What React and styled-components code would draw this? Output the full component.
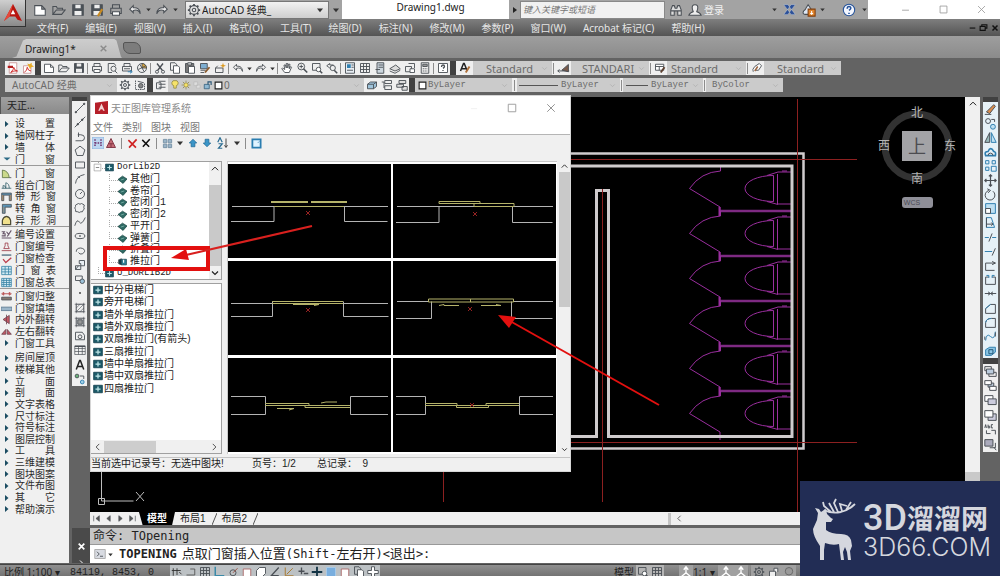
import React, { useState } from "react";
import styled, { createGlobalStyle } from "styled-components";

const UI = `"Noto Sans", "Noto Sans CJK SC", sans-serif`;
const CJK = `"Liberation Sans", "Noto Sans CJK SC", sans-serif`;
const MONO = `"Liberation Mono", "Noto Sans CJK SC", monospace`;
const CONSOLE = `"DejaVu Sans Mono", "Noto Sans CJK SC", monospace`;

const GlobalStyle = createGlobalStyle`
  * { box-sizing: border-box; }
  body { margin: 0; background: #636363; font-family: ${UI}; font-size: 10px; overflow: hidden; }
  button, input, select { font: inherit; color: inherit; background: none; border: 0; padding: 0; margin: 0; border-radius: 0; }
  select { appearance: none; outline: none; }
  ul { list-style: none; margin: 0; padding: 0; }
  h1, h2 { margin: 0; font: inherit; }
  svg { display: block; flex: none; }
`;

/* ---------- icons ---------- */

const blue = "#2f7fb0";

const glyphs = {
  new: <path d="M2 3h8l4 4v7H2zM10 3v4h4" fill="#fff" />,
  open: <path d="M1 13V4h4l1 2h6v2M1 13l4-5h10l-4 5z" />,
  save: <><path d="M2 2h12v12H2z" fill="#4c5258" /><path d="M5 2h6v4H5zM4 9h8v5H4z" fill="#eee" stroke="none" /></>,
  saveAs: <><path d="M2 2h12v12H2z" fill="#4c5258" /><path d="M5 2h6v4H5zM4 9h8v5H4z" fill="#eee" stroke="none" /><path d="M14 7l-5 8" stroke="#c98a20" strokeWidth="2.4" /></>,
  print: <><path d="M4 6V2h8v4M2 6h12v6H2z" /><path d="M4 10h8v4H4z" fill="#fff" /></>,
  plot: <><path d="M4 6V2h8v4M2 6h12v6H2z" /><path d="M4 9h8" /><path d="M9 13h5M12 11l3 2-3 2" stroke={blue} /></>,
  preview: <><path d="M3 14V2h8l2 3M3 14h5" /><circle cx="10" cy="9" r="3.4" /><path d="M12 12l3 3" /></>,
  publish: <><circle cx="8" cy="8" r="6" /><path d="M8 8V2a6 6 0 0 1 6 6z" fill="#dba63a" /><path d="M3 10l10-5M5 3l6 10" /></>,
  undo: <path d="M6 3L2 7l4 4V8.500q6-2 8 4Q14 5 6 5.500z" fill="#eee" />,
  redo: <path d="M10 3l4 4-4 4V8.500q-6-2-8 4Q2 5 10 5.500z" fill="#eee" />,
  caret: <path d="M4 6h8l-4 5z" fill="#333" stroke="none" />,
  down: <path d="M4 6l4 4 4-4" />,
  up: <path d="M3 10l5-5 5 5" />,
  left: <path d="M10 3L5 8l5 5" />,
  right: <path d="M6 3l5 5-5 5" />,
  play: <path d="M4 2l8 6-8 6z" fill="#222" stroke="none" />,
  gear: <><circle cx="8" cy="8" r="5" /><circle cx="8" cy="8" r="2" /><path d="M8 1v2M8 13v2M1 8h2M13 8h2M3 3l1.500 1.500M11.500 11.500L13 13M13 3l-1.500 1.500M4.500 11.500L3 13" strokeWidth="2" /></>,
  gearBox: <><path d="M2 2v12h12V6" strokeDasharray="2 1" /><circle cx="9" cy="9" r="3" fill="#888" /><path d="M5 3l8 2" /></>,
  binoculars: <path d="M2 14V8l2-5h2l1 3h2l1-3h2l2 5v6h-4v-5H6v5zM2 9h4M10 9h4" fill="#ddd" />,
  user: <path d="M8 2q4 0 3 5l-1 3q4 1 5 4H1q1-3 5-4L5 7Q4 2 8 2z" fill="#eee" />,
  exchange: <path d="M1 2h5l9 12h-5zM15 2h-5L1 14h5z" fill="#2b4f97" stroke="#cfe0f5" strokeWidth=".4" />,
  cloud: <><path d="M7 2l4 6-3 5H3q-3-1-1-4 2-1 3-4z" fill="#dfe8f5" /><path d="M7 7h8v8H7z" fill="#e2842b" stroke="#804010" /><path d="M11 9v4M9.500 11.500L11 13l1.500-1.500" stroke="#fff" /></>,
  help: <><circle cx="8" cy="8" r="6.500" fill="#f4f7ff" stroke="#26539a" /><path d="M6 6.500Q6 4 8 4t2 2q0 1-2 2.500M8 11v1.500" stroke="#26539a" strokeWidth="1.800" /></>,
  helpBox: <><path d="M2 2h12v12H2z" fill="#fff" /><path d="M6 6.500Q6 4 8 4t2 2q0 1-2 2.500M8 10.500v1.500" strokeWidth="1.800" /></>,
  min: <path d="M3 9h10" />,
  max: <path d="M3 3h10v10H3z" />,
  restore: <path d="M5 6V3h9v6h-3M2 6h9v7H2z" />,
  close: <path d="M3 3l10 10M13 3L3 13" />,
  pdf: <><path d="M3 1h10v14H3z" fill="#fff" stroke="#c99" /><path d="M1 5h7v3H1z" fill="#b31d1d" stroke="none" /><path d="M5 14q4-4 4-7 1 5 5 5-5-1-9 2z" stroke="#c22" /></>,
  pdfEdit: <><path d="M2 5h10v10H2z" fill="#fff" stroke="#c99" /><path d="M3 14q4-3 4-7 1 5 5 5" stroke="#c22" /><path d="M7 2l3 1 3-2v3l3 2-4 1-1 3-2-4z" fill="#e8ad28" stroke="none" /></>,
  cut: <><path d="M4 2l7 9M12 2L5 11" strokeWidth="1.800" /><circle cx="4" cy="13" r="2" /><circle cx="12" cy="13" r="2" /></>,
  copy: <><path d="M2 1h6l2 2v8H2z" /><path d="M6 5h6l2 2v8H6z" fill="#fff" /></>,
  paste: <><path d="M2 2h11v12H2z" fill="#777" /><path d="M6 6h8v9H6z" fill="#fff" /><path d="M5 1h5v3H5z" fill="#ddd" /></>,
  match: <><path d="M2 2h9v7H2z" fill="#7eaed0" /><path d="M2 11h7M2 14h5" /><path d="M14 7l-6 7" stroke="#8a5a2b" strokeWidth="2.400" /></>,
  block: <><path d="M2 8h10v6H2zM2 8l3-3" /><path d="M12 1l1 3 3 1-3 1-1 3-1-3-3-1 3-1z" fill="#dc9b20" stroke="none" /></>,
  pan: <path d="M5 14L1 9l1-1 3 2-1-6h2l1 4V2h2v6l1-5h2l-1 6 2-3 1 1-3 7z" fill="#fff" />,
  zoom: <><circle cx="7" cy="6" r="4.500" /><path d="M7 3.500v5M4.500 6h5" /><path d="M10 9l5 5" strokeWidth="2.200" /></>,
  zoomWin: <><path d="M2 2h10v9H2z" /><circle cx="10" cy="10" r="3" fill="#fff" /><path d="M12 12l3 3" strokeWidth="2" /></>,
  zoomPrev: <><path d="M1 5l4-3v2h5M1 5l4 3" /><circle cx="9" cy="8" r="3.500" /><path d="M11 11l4 4" strokeWidth="2" /></>,
  props: <><path d="M2 1h12v14H2z" fill="#e8eef4" /><path d="M4 3h5v5H4z" fill={blue} stroke="none" /><path d="M10 4h3M10 7h3M4 11h8" /></>,
  design: <><path d="M2 2h12v12H2z" /><path d="M2 6h12M2 10h12M6 2v12M10 2v12" /></>,
  palette: <><path d="M4 1h9v14H4z" fill="#ccd6de" /><path d="M6 4h6M6 7h6M2 10h6" /></>,
  sheet: <><path d="M1 9l8-5 6 5-7 3z" fill="#ddd" /><path d="M1 12l7 3 7-4" /></>,
  markup: <><path d="M2 6h8v7H2zM6 2h8v6" /><path d="M8 9h6v5H8z" fill="#fff" /></>,
  calc: <><path d="M3 1h10v14H3z" /><path d="M5 3h6v3H5z" fill="#999" /><path d="M5 9h6M5 12h6" strokeDasharray="1.500 1" /></>,
  textStyle: <><path d="M2 12L6 2h1l4 10M4 9h6" strokeWidth="2" stroke="#222" /><path d="M14 6l-5 8" stroke="#b0713a" strokeWidth="2.600" /></>,
  dimStyle: <><path d="M1 11h14M3 9l-2 2 2 2" /><path d="M14 3v9L6 10z" fill="#7a5a4a" /></>,
  tableStyle: <><path d="M2 3h11v8H2zM2 6h11M7 6v5" fill="#fff" /><path d="M14 7l-5 7" stroke="#5d4030" strokeWidth="2.600" /></>,
  leader: <><path d="M3 13q-2-3 2-7l6-4 3 3-4 6H6" fill="#fff" /><path d="M5 12l4-6" stroke="#9b6540" strokeWidth="2" /></>,
  layers: <><path d="M5 3h9M5 7h9M5 11h9M2 5h6v8H2z" fill="#eee" /></>,
  layerPrev: <><path d="M2 7l4-3h8v6l-4 3H2z" fill="#9ec3da" /><path d="M2 7h8v6M10 7l4-3" /></>,
  layerState: <path d="M5 2h9v4H5zM5 9h9v5H5zM1 4h3v8" />,
  layerIso: <path d="M4 2h9v4H4zM1 7h9v4H1zM8 10h7v5H8z" fill="#ddd" />,
  bulb: <path d="M8 1a4 4 0 0 1 2 8v4H6V9a4 4 0 0 1 2-8z" fill="#f6e36a" stroke="#8a8040" />,
  sun: <><circle cx="8" cy="8" r="3.500" fill="#f6e36a" stroke="#8a8040" /><path d="M8 1v2M8 13v2M1 8h2M13 8h2M3 3l2 2M11 11l2 2M13 3l-2 2M5 11l-2 2" stroke="#8a8040" /></>,
  freeze: <path d="M3 3h6v6H3zM7 8h6v5H7z" fill="#ddd" stroke="#bbb" />,
  lock: <><path d="M2 7h8v7H2z" fill="#8fb8d2" stroke="#2c5878" /><path d="M8 7V3h5v5" stroke="#2c5878" strokeWidth="1.800" /></>,
  swatch: <path d="M2 2h12v12H2z" fill="#fff" stroke="#222" strokeWidth="2" />,

  line: <><path d="M2 14L14 2" /><circle cx="2.500" cy="13.500" r="1" fill="#555" /><circle cx="13.500" cy="2.500" r="1" fill="#555" /></>,
  xline: <><path d="M1 15L15 1" /><circle cx="5" cy="11" r="1" fill="#333" /><circle cx="11" cy="5" r="1" fill="#333" /></>,
  pline: <path d="M2 13h8q4 0 4-4T9 5H5M6 8V2" />,
  polygon: <path d="M8 1.500l6.500 5L12 14H4L1.500 6.500z" />,
  rect: <path d="M2 4h12v8H2z" />,
  arc: <path d="M2 14Q3 4 14 2M5 5l3 1" />,
  circle: <><circle cx="8" cy="8" r="6" /><path d="M8 8l3-3" /></>,
  rev: <path d="M4 3q2-2 4 0 2-2 4 0 3 0 1 4 2 3-1 4 0 3-3 2-2 2-4 0-4 1-3-3-2-2 0-4-1-2 2-3z" />,
  spline: <path d="M1 13Q4 3 7 8t8-6" />,
  ellipse: <><ellipse cx="8" cy="8" rx="6.500" ry="3.500" /><circle cx="8" cy="8" r=".6" fill="#444" /></>,
  ellArc: <path d="M3 9Q3 4 9 4q6 1 5 5-2 4-6 3l-2-2" />,
  insert: <path d="M2 9h7v5H2zM7 2h7v7H9V6H7zM2 14l4-5" fill="#e9eef2" />,
  makeBlock: <><path d="M2 4h9v6H2z" /><circle cx="11" cy="11" r="3" fill="#9ec3da" /></>,
  point: <circle cx="8" cy="8" r="1.200" fill="#333" stroke="none" />,
  hatch: <><path d="M3 3h10v10H3zM1 3h14M1 13h14M3 1v14M13 1v14" strokeWidth=".8" /><path d="M3 8l5-5M3 13L13 3M8 13l5-5" strokeWidth=".8" /></>,
  gradient: <><path d="M3 3h10v10H3zM1 3h14M1 13h14M3 1v14M13 1v14" strokeWidth=".8" /><path d="M5 5h6v6H5z" fill="#999" /></>,
  region: <><path d="M2 3h9l3 4v6H2z" /><circle cx="8" cy="9" r="2.500" /></>,
  table: <><path d="M1 3h14v11H1zM1 6h14M1 10h14M6 3v11M11 3v11" strokeWidth=".9" /><path d="M1 3h14" strokeWidth="2" /></>,
  mtext: <path d="M3 14L7.500 2h1L13 14M4.500 10h7" strokeWidth="2" stroke="#222" />,
  add: <><circle cx="4" cy="4" r="2.500" fill="#6ab47a" /><circle cx="11" cy="12" r="2.500" fill="#9fd0e8" stroke={blue} /><path d="M8 4h5v4" /></>,

  erase: <><path d="M3 11l9-9 2 2-7 9z" fill="#d98c4c" /><path d="M1 14h8" /></>,
  copyObj: <><circle cx="5" cy="5" r="3" /><circle cx="11" cy="12" r="3" fill="#bfe0f2" stroke={blue} /><path d="M9 3h4v3" /></>,
  mirror: <><path d="M7 2v12H1z" fill="#9bb" /><path d="M9 2v12h6z" fill="#bfe0f2" stroke={blue} /></>,
  offset: <><path d="M2 13q-2-5 3-5 3-7 7 0 3 0 2 5z" stroke={blue} strokeWidth="2" /><path d="M5 13q0-3 3-3t3 3" /></>,
  array: <path d="M2 2h4v4H2zM10 2h4v4h-4zM2 10h4v4H2zM9 9h6v6H9z" stroke={blue} />,
  move: <path d="M8 1v14M1 8h14M6 3l2-2 2 2M6 13l2 2 2-2M3 6L1 8l2 2M13 6l2 2-2 2" strokeWidth="1.500" />,
  rotate: <path d="M6 3a6 6 0 1 0 5 1M4 1l4 2-3 3" />,
  scale: <><path d="M2 2h12v12H2z" fill="#bfe0f2" stroke={blue} /><path d="M2 8h6v6H2z" fill="#fff" /></>,
  stretch: <><path d="M3 2h6l4 12H3z" stroke={blue} /><path d="M3 10h8M9 8l2 2-2 2M3 2v12" /></>,
  trim: <><path d="M1 8h5M10 8h5" stroke={blue} /><path d="M6 13L10 3" /></>,
  extend: <><path d="M1 8h9" stroke={blue} /><path d="M10 13l4-9" /></>,
  breakPt: <path d="M14 5H2v9h11M10 3l4 2-4 2" />,
  breakIt: <><path d="M6 5H2v9h12V5h-4" /><path d="M3 3h3v3M13 3h-3v3" stroke={blue} /></>,
  join: <path d="M1 8h14M5 6l3 2-3 2M11 6L8 8l3 2" />,
  chamfer: <><path d="M2 14V8l6-5h6v11z" /><path d="M2 8l6-5" stroke={blue} /></>,
  fillet: <><path d="M2 14V8q1-5 7-5h5v11z" /><path d="M2 8q1-5 7-5" stroke={blue} /></>,
  blend: <><path d="M2 13Q3 3 8 8t6-6" stroke={blue} /><path d="M1 12V8M14 8V3" /></>,
  explode: <><path d="M2 7l5-3h7v6l-5 4H2z" fill="#8cc6e4" stroke={blue} /><path d="M6 7h5v5H6z" stroke="#1f5577" /></>,
  front: <><path d="M1 2h8v5H1zM6 9h9v5H6z" /><path d="M3 5h9v6H3z" fill="#bcd" /></>,
  back: <><path d="M5 5h7v5H5z" fill="#bcd" /><path d="M1 2h8v5H1zM7 9h8v5H7z" fill="#fff" /></>,
  above: <><path d="M1 2h10v7H1z" fill="#fff" /><path d="M5 6h10v7H5z" fill="#ccd" /></>,
  under: <><path d="M5 6h10v8H5z" fill="#ccd" /><path d="M1 2h10v8H1z" fill="#fff" /></>,
  textFront: <><path d="M1 6l1-4 1 4M5 2v4h2V4H5M11 2H9v4h2" /><path d="M3 9v4h5M9 9h5v5" /></>,
  hatchBack: <><path d="M1 2h10v8H1z" fill="#aab" /><path d="M7 12h7V6M12 11l3 4" /></>,

  door: <><path d="M2 14V3q9 1 10 11z" fill="#cbd98c" stroke="#5c7344" /><path d="M12 14h3" /></>,
  combo: <path d="M1 12h14M3 12V8q4 0 4 4V4q5 1 5 8" stroke="#38626e" />,
  strip: <><path d="M1 3h14v3H1z" fill="#5b94b6" /><path d="M1 6v8h3V6M12 6v8h3V6" fill="#ac9270" /></>,
  corner: <><path d="M2 2h13v4H6v9H2z" fill="#5b94b6" /><path d="M4 6v8" stroke="#ac9270" /></>,
  arch: <path d="M2 14V8q1-5 6-6 5 1 6 6v6z" fill="#f0e08c" stroke="#4d4d38" strokeWidth="1.800" />,
  number: <path d="M1 13h14M1 4h4l-2 3h3v3H1M8 4l4 5M15 2L9 11" stroke="#675568" strokeWidth="1.600" />,
  numStamp: <path d="M1 14h14M4 11h8l-2-4V3H6v4z" stroke="#9c3b48" />,
  check: <><path d="M1 3h14" stroke="#527084" strokeWidth="2" /><path d="M3 9l4 5 8-7" stroke="#bd4350" strokeWidth="2" /></>,
  grid: <path d="M1 2h14v12H1zM1 6h14M1 10h14M6 2v12M11 2v12" fill="#d4ebf4" stroke="#3c86a8" />,
  gridFull: <path d="M1 2h14v12H1zM1 5h14M1 8h14M1 11h14M4 2v12M8 2v12M12 2v12" fill="#d4ebf4" stroke="#3c86a8" />,
  align: <><path d="M1 4l3-2v4zM15 4l-3-2v4zM3 4h10" stroke="#b33b3b" /><path d="M1 9h14v4H1z" fill="#86796f" /></>,
  fill: <path d="M0 6h16v5H0z" fill="#9cb6c9" stroke="#5c7890" />,
  flipIn: <path d="M12 2v12L3 8zM8 1v14" fill="#c65663" stroke="#6e4450" />,
  flipSide: <path d="M1 12l6-7v7zM9 5v7h6z" fill="#c65663" stroke="#6e4450" />,
  tri: <path d="M4 2l7 6-7 6z" fill="#1b4c62" stroke="none" />,
  triDown: <path d="M1 5h14l-7 6z" fill="#2c6a86" stroke="none" />,

  lib: <><path d="M1 2h14v12H1z" fill="#1c5a68" stroke="#0e3a48" /><path d="M8 4v8M4 8h8" stroke="#bfe6e8" strokeWidth="2" /></>,
  leaf: <><path d="M0 8l8-6 8 5-7 8z" fill="#2e6a64" stroke="#123e3c" /><path d="M5 9l6-2" stroke="#8fc0b8" /></>,
  leafOpen: <><path d="M1 5l5-2v11l-5-2z" fill="#123e48" /><path d="M6 4h9v10H6z" fill="#2f7f94" stroke="#123e48" /><path d="M10 5v5" stroke="#fff" strokeWidth="2" /></>,
  minus: <><path d="M2 2h12v12H2z" fill="#fff" stroke="#999" /><path d="M5 8h6" stroke="#555" /></>,
  none: null,
  libNew: <><path d="M0 0h16v16H0z" fill="#bcd6f0" stroke="#8bb2dc" /><path d="M4 3v10M12 3v10M4 8h8" stroke="#70306c" strokeWidth="2" strokeDasharray="2 1.500" /></>,
  pyramid: <path d="M8 2l6 12H2zM5 9h6M8 9v5" fill="#c46a74" stroke="#7c3040" />,
  redX: <path d="M2 3l11 11M14 2L3 14" stroke="#cf2222" strokeWidth="2.400" />,
  blackX: <path d="M2 3l11 11M14 2L3 14" stroke="#111" strokeWidth="2.400" />,
  tiles: <path d="M2 2h5v5H2zM9 2h5v5H9zM2 9h5v5H2zM9 9h5v5H9z" fill="#9bb5c8" stroke="#6f8ba0" />,
  arrowUp: <path d="M8 2l6 6h-3v6H5V8H2z" fill="#3b95c8" stroke="#216a96" />,
  arrowDown: <path d="M8 14l6-6h-3V2H5v6H2z" fill="#3b95c8" stroke="#216a96" />,
  sort: <><path d="M1 7l3-6 3 6M2 9h5l-5 6h5" stroke="#2a6c92" strokeWidth="1.600" /><path d="M12 2v11M10 11l2 3 2-3" stroke="#333" /></>,
  view: <><path d="M2 2h12v12H2z" fill="#dff3ff" stroke="#2a7db0" strokeWidth="2.600" /><path d="M12 5l-2 2" stroke="#2a7db0" /></>,
  logo: <><path d="M8 0l8 15-4-1-2-3H5L0 15z" fill="#b8150f" stroke="none" /><path d="M8 0L5 11 0 15z" fill="#e8493a" stroke="none" /><path d="M8 5l2 4H6z" fill="#fff" stroke="none" /></>,
  logoTile: <><path d="M0 2l16-2v16H0z" fill="#b6202a" stroke="none" /><path d="M8 3l4 9h-2l-1-2H7l-1 2H4z" fill="#f3d4d4" stroke="none" /></>,
  first: <path d="M3 3v10M13 3L7 8l6 5z" fill="#555" />,
  prev: <path d="M11 3L5 8l6 5z" fill="#555" />,
  next: <path d="M5 3l6 5-6 5z" fill="#555" />,
  last: <path d="M13 3v10M3 3l6 5-6 5z" fill="#555" />,
  prompt: <><path d="M1 2h14v12H1z" fill="#d8dbe2" stroke="#aaa" /><path d="M4 5l3 3-3 3M8 11h4" /></>,
  infer: <path d="M3 3v10M1 6h12M8 3v9M11 8l3 3" stroke="#333" />,
  snap: <path d="M2 12h11V4H7" stroke="#555" />,
  ortho: <path d="M3 1v12h12" stroke="#3a8aa8" strokeWidth="2" />,
  polar: <><circle cx="8" cy="9" r="4" /><path d="M8 9l6-6" stroke="#943" /></>,
  osnap: <path d="M3 4h10v10H3z" fill="#fff" stroke="#a66" />,
  osnap3: <path d="M2 6l4-4h8v8l-4 4H2z" fill="#fff" />,
  angle: <path d="M13 2L3 13h10" strokeWidth="1.800" />,
  ducs: <path d="M3 2v11h11M5 11l8-8" stroke="#a67324" />,
  dyn: <path d="M6 2v9M2 7h8M9 10h6" strokeWidth="1.800" />,
  plus: <path d="M8 1v14M1 8h14" stroke="#134" strokeWidth="2.400" />,
  shade: <path d="M2 2h12v12H2z" fill="#79aede" stroke="#a8cbe8" />,
  cross: <path d="M6 1h4v5h5v4h-5v5H6v-5H1V6h5z" fill="#fff" />,
  person: <path d="M8 1v8M8 9l-6 5M8 9l6 5M5 5l3-4 3 4" stroke="#fff" strokeWidth="1.800" />,
  unlock: <path d="M2 7h8v7H2zM8 7V3h5v5" fill="#eee" />,
  ball: <circle cx="8" cy="7" r="5" fill="#999" stroke="#666" />,
};

const Icon = ({ name, size = 12, color = "#4a4f55", weight = 1.2 }) => (
  <svg width={size} height={size} viewBox="0 0 16 16" fill="none" stroke={color} strokeWidth={weight} aria-hidden="true">
    {glyphs[name]}
  </svg>
);

/* ---------- shell ---------- */

const Page = styled.div`
  position: relative;
  display: flex;
  flex-direction: column;
  height: 100vh;
  overflow: hidden;
  background: #636363;
  color: #333;
`;

const Header = styled.header`
  display: grid;
  grid-template-columns: 26px 1fr;
  grid-template-rows: 19px 17px;
  background: linear-gradient(#7e7e7e, #545454) 0 19px / 100% 17px no-repeat, #a3a3a3;
`;

const AppButton = styled.button`
  grid-row: 1 / 3;
  height: 27px;
  display: flex;
  align-items: center;
  justify-content: center;
  background: linear-gradient(#cfcfcf, #8a8a8a);
  border-right: 1px solid #333;
  border-bottom: 1px solid #333;
`;

const TopRow = styled.div`
  display: flex;
  align-items: center;
  min-width: 0;
  height: 19px;
  padding-left: 4px;
`;

const IconButton = styled.button`
  display: flex;
  align-items: center;
  justify-content: center;
  flex: none;
  width: ${(p) => p.$w || 15}px;
  height: ${(p) => p.$h || 14}px;
  background: ${(p) => p.$bg || "none"};
`;

const Spacer = styled.div`
  flex: 1;
`;

const QuickSelect = styled.label`
  display: flex;
  align-items: center;
  gap: 1px;
  flex: none;
  width: 144px;
  height: 18px;
  padding: 0 2px 0 1px;
  margin-left: 6px;
  background: linear-gradient(#f2f2f2, #cfcfcf);
  border: 1px solid #777;
  color: #222;
  select { flex: 1; min-width: 0; }
`;

const DocTitle = styled.h1`
  flex: 1;
  height: 19px;
  line-height: 15px;
  background: #fff;
  color: #222;
  text-align: center;
  padding-left: 10px;
`;

const Search = styled.input`
  width: 145px;
  height: 18px;
  padding: 0 2px;
  background: #f1f1f1;
  border: 1px solid #888;
  font-style: italic;
  font-size: 9px;
  &::placeholder { color: #777; opacity: 1; }
`;

const Actions = styled.div`
  display: flex;
  align-items: center;
  width: 203px;
  height: 19px;
  padding-left: 1px;
`;

const Login = styled.button`
  color: #f2f2f2;
  width: 66px;
  text-align: left;
`;

const WindowButtons = styled.div`
  display: flex;
  align-items: center;
  padding-left: ${(p) => p.$pad || 0}px;
  background: ${(p) => p.$bg || "none"};
  height: 100%;
`;

const MenuBar = styled.nav`
  display: flex;
  align-items: center;
  height: 17px;
  padding-left: 11px;
  gap: 17px;
  color: #e6e6e6;
  button { white-space: nowrap; }
`;

const TabBar = styled.div`
  display: flex;
  align-items: flex-end;
  flex: none;
  height: 22px;
  padding-left: 12px;
  background: linear-gradient(#9e9e9e, #8b8b8b);
`;

const FileTab = styled.button`
  display: flex;
  align-items: center;
  justify-content: space-between;
  width: 110px;
  height: 19px;
  padding: 0 14px 0 13px;
  color: #222;
  background: linear-gradient(#cdcdcd, #bdbdbd);
  clip-path: polygon(0 100%, 4% 92%, 10% 8%, 13% 0, 93% 0, 95% 8%, 99% 92%, 100% 100%);
`;

const NewTab = styled.button`
  width: 18px;
  height: 12px;
  margin: 0 0 4px 1px;
  border: 1px solid #555;
  border-radius: 2px 7px 2px 7px;
  background: #7c7c7c;
  color: #aaa;
  line-height: 9px;
`;

const Toolbars = styled.div`
  display: flex;
  flex-direction: column;
  flex: none;
  gap: 3px;
  height: 37px;
  padding: 3px 0 3px 5px;
`;

const ToolRow = styled.div`
  display: flex;
  height: 14px;
`;

const Strip = styled.div`
  display: flex;
  align-items: center;
  flex: none;
  height: 14px;
  background: #efefef;
`;

const Grip = styled.div`
  flex: none;
  width: 6px;
  background: #414141;
`;

const Divider = styled.span`
  flex: none;
  width: 1px;
  height: 11px;
  margin: 0 ${(p) => p.$gap || 1}px;
  background: #8c8c8c;
`;

const Combo = styled.label`
  display: flex;
  align-items: center;
  flex: none;
  gap: 1px;
  width: ${(p) => p.$w}px;
  height: 14px;
  padding: 0 3px 0 ${(p) => p.$pad || 3}px;
  background: #cbcbcb;
  color: #6c6c6c;
  font-family: ${(p) => (p.$mono ? MONO : UI)};
  font-size: ${(p) => p.$size}px;
  overflow: hidden;
  select { flex: 1; min-width: 0; }
`;

const LineSample = styled.span`
  flex: none;
  width: ${(p) => p.$w}px;
  height: 1px;
  margin-right: 2px;
  background: #555;
`;

const Workspace = styled.main`
  display: flex;
  flex: 1;
  min-height: 0;
`;

/* ---------- left palette ---------- */

const Palette = styled.aside`
  width: 69px;
  flex: none;
  margin: 2px 0 1px;
  background: #f0f0f0;
  overflow: hidden;
`;

const PaletteTitle = styled.h2`
  height: 17px;
  line-height: 17px;
  padding-left: 6px;
  border-left: 1px solid #555;
  background: linear-gradient(#a0a0a0, #8a8a8a);
  color: #222;
  margin-bottom: 4px;
`;

const PaletteGroup = styled.ul`
  display: grid;
  grid-auto-rows: 1fr;
  height: ${(p) => p.$h}px;
  margin-bottom: 2px;
  border-bottom: 1px solid ${(p) => (p.$line ? "#9a9a9a" : "transparent")};
  li { min-height: 0; }
`;

const PaletteItem = styled.button`
  display: flex;
  align-items: center;
  gap: 3px;
  height: 100%;
  padding-left: ${(p) => (p.$inset ? 2 : 1)}px;
  color: #2c2c2c;
  font-family: ${CJK};
  line-height: 11px;
  white-space: pre;
  svg { width: ${(p) => (p.$inset ? 10 : 11)}px; }
`;

const paletteGroups = [
  { h: 48, line: true, rows: [["tri", "设　　置"], ["tri", "轴网柱子"], ["tri", "墙　　体"], ["triDown", "门　　窗"]] },
  { h: 59, line: true, rows: [["door", "门　　窗"], ["combo", "组合门窗"], ["strip", "带  形  窗"], ["corner", "转  角  窗"], ["arch", "异  形  洞"]] },
  { h: 60, line: true, rows: [["number", "编号设置"], ["numStamp", "门窗编号"], ["check", "门窗检查"], ["grid", "门  窗  表"], ["gridFull", "门窗总表"]] },
  { h: 59, rows: [["align", "门窗归整"], ["fill", "门窗填墙"], ["flipIn", "内外翻转"], ["flipSide", "左右翻转"], ["tri", "门窗工具"]] },
  {
    h: 164,
    rows: ["房间屋顶", "楼梯其他", "立　　面", "剖　　面", "文字表格", "尺寸标注", "符号标注", "图层控制", "工　　具", "三维建模", "图块图案", "文件布图", "其　　它", "帮助演示"].map((t) => ["tri", t]),
  },
];

/* ---------- editor ---------- */

const Editor = styled.div`
  display: flex;
  flex-direction: column;
  flex: 1;
  min-width: 0;
`;

const EditorTop = styled.div`
  display: flex;
  gap: 3px;
  flex: 1;
  min-height: 0;
  padding: 2px 2px 0 3px;
`;

const SideTools = styled.div`
  flex: none;
  width: 15px;
`;

const SideHead = styled.div`
  height: ${(p) => p.$h || 4}px;
  background: #414141;
`;

const SideGroup = styled.div`
  display: grid;
  grid-auto-rows: 1fr;
  height: ${(p) => p.$h}px;
  background: ${(p) => p.$bg || "#efefef"};
  button { height: 100%; min-height: 0; }
`;

const CanvasColumn = styled.div`
  display: flex;
  flex-direction: column;
  flex: 1;
  min-width: 0;
`;

const CanvasRow = styled.div`
  display: flex;
  flex: 1;
  min-height: 0;
`;

const Canvas = styled.div`
  position: relative;
  flex: 1;
  min-width: 0;
  background: #000;
  overflow: hidden;
`;

const Compass = styled.svg`
  position: absolute;
  top: 8px;
  right: 8px;
`;

const VScroll = styled.div`
  display: flex;
  flex-direction: column;
  align-items: center;
  flex: none;
  width: ${(p) => p.$w || 15}px;
  padding-top: ${(p) => p.$pad || 0}px;
  background: #f0f0f0;
`;

const VThumb = styled.div`
  width: 100%;
  height: ${(p) => p.$h}px;
  margin-top: ${(p) => p.$top || 0}px;
  margin-bottom: auto;
  background: #c9c9c9;
`;

const LayoutBar = styled.div`
  display: flex;
  align-items: center;
  flex: none;
  height: 13px;
  background: #f0f0f0;
  font-family: ${CJK};
`;

const LayoutTab = styled.button`
  height: 13px;
  line-height: 12px;
  padding: 0 ${(p) => (p.$on ? 8 : 5)}px;
  margin-left: ${(p) => (p.$on ? 1 : 0)}px;
  color: ${(p) => (p.$on ? "#fff" : "#222")};
  background: ${(p) => (p.$on ? "#000" : "none")};
  font-weight: ${(p) => (p.$on ? 700 : 400)};
  clip-path: ${(p) => (p.$on ? "polygon(0 0, 100% 0, 92% 100%, 10% 100%)" : "none")};
`;

const Slash = styled.svg`
  width: 5px;
  height: 12px;
  margin-left: 1px;
`;

const HScrollPart = styled.div`
  display: flex;
  align-items: center;
  width: 312px;
  height: 12px;
  padding-left: 4px;
  border-left: 3px solid #c4c4c4;
`;

const CommandDock = styled.div`
  display: flex;
  flex: none;
  height: 39px;
  padding: 3px 0 1px 3px;
`;

const CommandGrip = styled.div`
  display: flex;
  flex-direction: column;
  align-items: center;
  gap: 8px;
  width: 18px;
  padding-top: 14px;
  background: #4a4a4a;
  overflow: hidden;
`;

const CommandBody = styled.div`
  flex: 1;
  min-width: 0;
  font-family: ${CONSOLE};
  font-size: 12px;
  color: #222;
`;

const History = styled.div`
  height: 17px;
  line-height: 17px;
  padding-left: 3px;
  background: #c6c6c6;
  border-bottom: 1px solid #999;
  white-space: pre;
`;

const CommandLine = styled.label`
  display: flex;
  align-items: center;
  height: 18px;
  padding-left: 4px;
  background: #fff;
  white-space: pre;
  line-height: 17px;
  input { flex: 1; min-width: 0; outline: none; }
`;

const Han = styled.span`
  font-family: ${CJK};
  font-size: 13px;
`;

const CommandName = styled.b`
  margin: 0 5px 0 4px;
`;

const StatusBar = styled.footer`
  display: flex;
  align-items: flex-start;
  flex: none;
  height: 12px;
  padding-left: 4px;
  overflow: hidden;
  background: linear-gradient(#8f8f8f, #747474);
  border-top: 1px solid #444;
  font-family: ${CJK};
  color: #222;
`;

const StatusText = styled.span`
  width: ${(p) => p.$w}px;
  flex: none;
  line-height: 15px;
  font-family: ${(p) => (p.$mono ? MONO : UI)};
  white-space: pre;
`;

/* ---------- drawing ---------- */

const stalls = [0, 1, 2, 3, 4, 5];

const FloorPlan = () => (
  <svg width="100%" height="100%" role="img" aria-label="平面图">
    <g transform="translate(-91 -97)" fill="none">
      <g stroke="#9a2e9e" strokeWidth="1">
        {stalls.map((i) => (
          <g key={i} transform={`translate(0 ${i * 45})`}>
            <path d="M721.500 166v5Q702 172 690.500 188.500L721 207v8" />
            {i < 5 && <path d="M721 211h71" stroke="#7e2a82" strokeWidth="2.500" />}
            {i < 5 && <path d="M720.500 207v9" strokeWidth="2" />}
            <path d="M774.500 175.500A28.500 13 0 0 0 774.500 201.500zM778.500 174v30M768 175.500l11-3.500M768 201.500l11 3M779 172h13M779 204h13M783 171h5" />
          </g>
        ))}
      </g>
      <g stroke="#cfcbcd">
        <path d="M571 153.500h233.500v295H571" strokeWidth="2.500" />
        <path d="M571 166h222v270.500H609.500V190.500H597.500v246H571" strokeWidth="3" />
      </g>
      <g stroke="#8c2020">
        <path d="M571 159.500h287M571 442.500h287M798.500 99v413M603.500 189v313M444.500 470v32" />
      </g>
      <path d="M102.500 470v31h32M99.500 498.500h6v6h-6zM137 492l8 9M145 492l-8 9" stroke="#bdbdbd" />
    </g>
  </svg>
);

const ViewCube = () => (
  <Compass width="80" height="106" fontFamily={CJK} textAnchor="middle">
    <circle cx="40" cy="41" r="32" fill="none" stroke="#323232" strokeWidth="7" />
    <rect x="25" y="26" width="30" height="30" fill="#a3a3a6" />
    <text x="40" y="48" fontSize="18" fill="#4c4c50">上</text>
    <g fontSize="12" fill="#b4b4b4">
      <text x="40" y="12">北</text>
      <text x="40" y="78">南</text>
      <text x="7" y="45">西</text>
      <text x="73" y="45">东</text>
    </g>
    <rect x="25" y="92" width="31" height="11" rx="3" fill="#8f8f98" />
    <text x="35" y="100" fontSize="7" fill="#4a4a54">WCS</text>
  </Compass>
);

/* ---------- block library window ---------- */

const Dialog = styled.section`
  position: absolute;
  left: 90px;
  top: 95px;
  display: flex;
  flex-direction: column;
  width: 481px;
  height: 377px;
  background: #f0f0f0;
  border: 1px solid #d6d6d6;
  font-family: ${CJK};
  color: #222;
`;

const DialogTitle = styled.div`
  display: flex;
  align-items: center;
  gap: 3px;
  height: 23px;
  padding-left: 4px;
  background: #fff;
  color: #8c8c8c;
`;

const DialogMenu = styled.div`
  display: flex;
  align-items: center;
  gap: 9px;
  height: 16px;
  padding-left: 2px;
  background: #fff;
  border-bottom: 1px solid #b5b5b5;
  color: #777;
`;

const DialogTools = styled.div`
  display: flex;
  align-items: center;
  height: 16px;
`;

const DialogBody = styled.div`
  display: flex;
  gap: 2px;
  flex: 1;
  min-height: 0;
  padding: 10px 0 3px;
`;

const LeftPane = styled.div`
  display: flex;
  flex-direction: column;
  gap: 3px;
  width: 131px;
  margin-right: 3px;
`;

const TreeBox = styled.div`
  display: flex;
  height: 119px;
  background: #fff;
  border: 1px solid #a0a0a0;
  border-left: 0;
  overflow: hidden;
`;

const Tree = styled.ul`
  display: grid;
  grid-auto-rows: 1fr;
  flex: 1;
  height: 117px;
`;

const TreeItem = styled.li`
  position: relative;
  min-height: 0;
  padding-left: ${(p) => (p.$child ? 27 : 2)}px;
  &::before {
    content: "";
    position: absolute;
    left: ${(p) => (p.$child ? 18 : 7)}px;
    top: 0;
    width: 8px;
    height: 6px;
    border-left: 1px dotted #aaa;
    border-bottom: 1px dotted #aaa;
  }
`;

const TreeLabel = styled.button`
  position: relative;
  display: flex;
  align-items: center;
  gap: 3px;
  height: 100%;
  font-family: ${MONO};
  font-size: ${(p) => (p.$root ? 9 : 10)}px;
  line-height: 11px;
  white-space: nowrap;
`;

const ListBox = styled.div`
  display: flex;
  flex-direction: column;
  flex: 1;
  background: #fff;
  border: 1px solid #a0a0a0;
  border-left: 0;
`;

const BlockList = styled.ul`
  display: grid;
  grid-auto-rows: 1fr;
  height: 111px;
  margin-bottom: auto;
  padding-left: 2px;
  li { min-height: 0; }
  button { display: flex; align-items: center; gap: 1px; height: 100%; line-height: 12px; white-space: nowrap; }
`;

const HScroll = styled.div`
  display: flex;
  align-items: center;
  height: 13px;
  padding: 0 2px;
  background: #f0f0f0;
`;

const HThumb = styled.div`
  width: 52px;
  height: 12px;
  margin: 0 auto 0 1px;
  background: #cdcdcd;
`;

const Previews = styled.div`
  display: grid;
  grid-template-columns: 1fr 1fr;
  grid-template-rows: repeat(3, 94px);
  gap: 3px 2px;
  flex: 1;
  padding: 2px 1px 0 0;
  background: #fff;
  border: 1px solid #c8c8c8;
  border-width: 1px 0 0 1px;
`;

const Preview = styled.button`
  background: #000;
  overflow: hidden;
`;

const DialogStatus = styled.div`
  display: flex;
  height: 14px;
  line-height: 12px;
  border-top: 1px solid #c4c4c4;
  white-space: pre;
  span:nth-child(1) { width: 161px; }
  span:nth-child(2) { width: 65px; }
`;

const treeRows = ["其他门", "卷帘门", "密闭门1", "密闭门2", "平开门", "弹簧门", "折叠门", "推拉门"];
const blocks = ["中分电梯门", "旁开电梯门", "墙外单扇推拉门", "墙外双扇推拉门", "双扇推拉门(有箭头)", "三扇推拉门", "墙中单扇推拉门", "墙中双扇推拉门", "四扇推拉门"];

// wall outline, door leaf lines and insertion point for each sliding door
const doors = [
  { wall: "M4 42.500h156M3 57.500h43v-15M116.500 42.500v15h43", leaf: "M43 38h37M83 38h36", leafWidth: 2, thin: "M46 42.500h70", x: 80, y: 49 },
  { wall: "M4 42.500h156M3 58.500h43v-16M119.500 42.500v16h40", leaf: "M46 37.500h41v2H46zM81 39.500h40v3H81z", x: 82, y: 50 },
  { wall: "M3 42.500h41M115 42.500h45M3 55.500h41.500v-15M115.500 40.500v15h45", leaf: "M44 40.500h71M44 42.500h71M65 43.500h26l-5 1", x: 80, y: 49 },
  { wall: "M4 40.500h32M120 40.500h40M3 57.500h35.500v-17M118.500 40.500v17h41", leaf: "M35.500 41v-3h85v3zM77.500 38v3M46 44.500l5-1v1h15M88 44.500h20l-5-1", x: 77, y: 48 },
  { wall: "M3 38.500h34.500v18H3M160 38.500h-37.500v18H160", leaf: "M37 45.500h44v2H37M122 47.500H77v2h45M49 50.500h17l-5 1.500M93 45l5-1h11", x: 0, y: 0 },
  { wall: "M3 38.500h29.500v18H3M160 38.500h-33.500v18H160", leaf: "M32 45.500h32v2H32M63.500 47.500h32v2h-32zM126 45.500H93v2h33", x: 79, y: 47 },
];

const BlockLibrary = () => {
  const [picked, setPicked] = useState("推拉门");
  return (
    <Dialog aria-label="天正图库管理系统">
      <DialogTitle>
        <Icon name="logoTile" size={13} />
        天正图库管理系统
        <Spacer />
        <IconButton $w={35} aria-label="最小化"><Icon name="min" size={10} color="#eee" /></IconButton>
        <IconButton $w={35} aria-label="最大化"><Icon name="max" size={12} color="#999" /></IconButton>
        <IconButton $w={38} aria-label="关闭"><Icon name="close" size={12} color="#888" /></IconButton>
      </DialogTitle>
      <DialogMenu>
        <button>文件</button><button>类别</button><button>图块</button><button>视图</button>
      </DialogMenu>
      <DialogTools>
        <IconButton $w={13} aria-label="新建"><Icon name="libNew" /></IconButton>
        <IconButton $w={14} aria-label="类别"><Icon name="pyramid" /></IconButton>
        <Divider $gap={3} />
        <IconButton $w={14} aria-label="删除类别"><Icon name="redX" size={11} /></IconButton>
        <IconButton $w={14} aria-label="删除"><Icon name="blackX" size={10} /></IconButton>
        <Divider $gap={3} />
        <IconButton $w={14} aria-label="布局"><Icon name="tiles" size={11} /></IconButton>
        <IconButton $w={12} aria-label="布局选项"><Icon name="caret" size={12} /></IconButton>
        <IconButton $w={14} aria-label="上页"><Icon name="arrowUp" size={10} /></IconButton>
        <IconButton $w={14} aria-label="下页"><Icon name="arrowDown" size={10} /></IconButton>
        <IconButton $w={18} aria-label="排序"><Icon name="sort" /></IconButton>
        <IconButton $w={10} aria-label="排序选项"><Icon name="caret" size={12} /></IconButton>
        <Divider $gap={3} />
        <IconButton $w={14} aria-label="视图"><Icon name="view" size={11} /></IconButton>
      </DialogTools>
      <DialogBody>
        <LeftPane>
          <TreeBox>
            <Tree>
              <TreeItem>
                <TreeLabel $root>
                  <Icon name="minus" size={9} /><Icon name="lib" size={9} />DorLib2D
                </TreeLabel>
              </TreeItem>
              {treeRows.map((name) => (
                <TreeItem key={name} $child>
                  <TreeLabel onClick={() => setPicked(name)}>
                    <Icon name={name === picked ? "leafOpen" : "leaf"} size={9} />{name}
                  </TreeLabel>
                </TreeItem>
              ))}
              <TreeItem>
                <TreeLabel $root>
                  <Icon name="none" size={9} /><Icon name="lib" size={9} />U_DORLIB2D
                </TreeLabel>
              </TreeItem>
            </Tree>
            <VScroll $w={12} $pad={2}>
              <Icon name="up" size={10} color="#222" weight={1.6} />
              <VThumb $h={81} $top={11} />
              <Icon name="down" size={12} color="#222" weight={1.6} />
            </VScroll>
          </TreeBox>
          <ListBox>
            <BlockList>
              {blocks.map((b) => (
                <li key={b}><button><Icon name="lib" size={10} />{b}</button></li>
              ))}
            </BlockList>
            <HScroll>
              <Icon name="left" size={10} color="#222" />
              <HThumb />
              <Icon name="right" size={10} color="#222" />
            </HScroll>
          </ListBox>
        </LeftPane>
        <Previews>
          {doors.map((d, i) => (
            <Preview key={i} aria-label={`图块 ${i + 1}`}>
              <svg width="163" height="94" fill="none">
                <path d={d.wall} stroke="#b4b4b4" />
                <path d={d.leaf} stroke="#b5b36a" strokeWidth={d.leafWidth || 1} />
                {d.thin && <path d={d.thin} stroke="#b5b36a" />}
                {d.x > 0 && <path d={`M${d.x - 2} ${d.y - 2}l4 4m0-4l-4 4`} stroke="#952222" />}
              </svg>
            </Preview>
          ))}
        </Previews>
        <VScroll $w={11} $pad={1}>
          <Icon name="up" size={9} color="#222" weight={1.6} />
          <VThumb $h={135} $top={1} />
          <Icon name="down" size={9} color="#222" weight={1.6} />
        </VScroll>
      </DialogBody>
      <DialogStatus>
        <span>当前选中记录号：无选中图块!</span>
        <span>页号：1/2</span>
        <span>总记录：  9</span>
      </DialogStatus>
    </Dialog>
  );
};

/* ---------- overlays ---------- */

const Marks = styled.svg`
  position: absolute;
  left: 0;
  top: 0;
  pointer-events: none;
`;

const Brand = styled.div`
  position: absolute;
  right: 0;
  bottom: 0;
  display: flex;
  align-items: center;
  gap: 6px;
  width: 200px;
  height: 95px;
  padding-left: 11px;
  background: #222d55;
  color: #d5d7de;
`;

const BrandText = styled.div`
  display: flex;
  flex-direction: column;
  padding-top: 2px;
`;

const BrandName = styled.div`
  display: flex;
  align-items: center;
  height: 34px;
  font-family: Roboto, sans-serif;
  font-size: 36px;
  font-weight: 500;
  span { font-family: ${CJK}; font-size: 27px; font-weight: 700; }
`;

const BrandSite = styled.div`
  font-family: Inter, sans-serif;
  font-size: 25px;
  line-height: 24px;
  font-weight: 300;
`;

const Deer = () => (
  <svg width="46" height="62" viewBox="0 0 46 62" aria-hidden="true">
    <path
      d="M4 10L8 11L10 14L13 12L15 11L16 16L20 20L22 21L20 24L15 24L15 32Q20 36 30 36Q38 36 40 42L41 48L39 53L40 62H37L36 54L34 49L32 54L33 62H30L29 54L28 46Q22 48 14 45L13 52L13 62H9L9 48Q2 38 2 31L6 22L7 15Z"
      fill="#d5d7de"
    />
    <path d="M13 12Q20 16 30 14Q38 12 44 6M20 14L13 8L12 4M23 14L18 5M27 14L23 5L25 1M31 13L29 6L36 8M35 12L40 4" fill="none" stroke="#d5d7de" strokeWidth="1.800" />
  </svg>
);

/* ---------- app ---------- */

const Tools = ({ names, w, h, size, bg }) =>
  names.split(" ").map((n, i) =>
    n === "|" ? <Divider key={i} /> : (
      <IconButton key={n + i} $w={n === "caret" ? 8 : w} $h={h} $bg={bg} aria-label={n}>
        <Icon name={n} size={n === "caret" ? 9 : size} />
      </IconButton>
    )
  );

const Pick = ({ label, value, w, pad, mono, size = 10, before }) => (
  <Combo $w={w} $pad={pad} $mono={mono} $size={size}>
    {before}
    <select aria-label={label}><option>{value}</option></select>
    <Icon name="down" size={9} color="#aaa" />
  </Combo>
);

const menus = ["文件(F)", "编辑(E)", "视图(V)", "插入(I)", "格式(O)", "工具(T)", "绘图(D)", "标注(N)", "修改(M)", "参数(P)", "窗口(W)", "Acrobat 标记(C)", "帮助(H)"];

const App = () => (
  <Page>
    <GlobalStyle />
    <Header>
      <AppButton aria-label="应用程序"><Icon name="logo" size={18} /></AppButton>
      <TopRow>
        <Tools names="new open save saveAs print undo caret redo caret" w={19} h={18} size={14} />
        <QuickSelect>
          <Icon name="gear" size={14} />
          <select aria-label="工作空间"><option>AutoCAD 经典_</option></select>
          <Icon name="caret" size={12} />
        </QuickSelect>
        <IconButton $w={13} $h={18} aria-label="自定义"><Icon name="caret" size={12} /></IconButton>
        <DocTitle>Drawing1.dwg</DocTitle>
        <IconButton $w={11} $h={18} aria-label="展开"><Icon name="play" size={8} /></IconButton>
        <Search placeholder="键入关键字或短语" aria-label="搜索" />
        <Actions>
          <IconButton $w={19} aria-label="查找"><Icon name="binoculars" size={14} /></IconButton>
          <IconButton $w={19} aria-label="账户"><Icon name="user" size={14} /></IconButton>
          <Login>登录</Login>
          <Tools names="caret" />
          <IconButton $w={22} aria-label="交换"><Icon name="exchange" size={13} /></IconButton>
          <IconButton $w={18} aria-label="云"><Icon name="cloud" size={14} /></IconButton>
          <Tools names="caret" />
          <Spacer />
          <IconButton $w={22} aria-label="帮助"><Icon name="help" size={14} /></IconButton>
          <Tools names="caret" />
        </Actions>
        <WindowButtons $bg="#fff" $pad={18}>
          <IconButton $w={38} aria-label="最小化"><Icon name="min" size={11} color="#999" /></IconButton>
          <IconButton $w={38} aria-label="最大化"><Icon name="max" size={11} color="#999" /></IconButton>
          <IconButton $w={38} aria-label="关闭"><Icon name="close" size={11} color="#999" /></IconButton>
        </WindowButtons>
      </TopRow>
      <MenuBar>
        {menus.map((m) => <button key={m}>{m}</button>)}
        <Spacer />
        <WindowButtons>
          <IconButton $w={11} aria-label="最小化文档"><Icon name="min" size={9} color="#111" weight={2} /></IconButton>
          <IconButton $w={11} aria-label="还原文档"><Icon name="restore" size={9} color="#111" weight={2} /></IconButton>
          <IconButton $w={11} aria-label="关闭文档"><Icon name="close" size={8} color="#111" weight={3} /></IconButton>
        </WindowButtons>
      </MenuBar>
    </Header>

    <TabBar>
      <FileTab>Drawing1*<Icon name="close" size={9} color="#8b8b8b" weight={2.5} /></FileTab>
      <NewTab aria-label="新建选项卡" />
    </TabBar>

    <Toolbars>
      <ToolRow>
        <Strip><Tools names="pdf pdfEdit" /></Strip>
        <Grip />
        <Strip>
          <Tools names="new open save | print preview plot publish | cut copy paste match block | undo caret redo caret | pan zoom zoomWin zoomPrev | props design palette sheet markup calc | helpBox" />
        </Strip>
        <Grip />
        <Strip>
          <IconButton $w={17} aria-label="文字样式"><Icon name="textStyle" /></IconButton>
          <Pick label="文字样式" value="Standard" w={79} pad={13} size={11} />
          <Divider />
          <IconButton $w={16} aria-label="标注样式"><Icon name="dimStyle" size={13} /></IconButton>
          <Pick label="标注样式" value="STANDARI" w={78} pad={11} size={11} />
          <Divider />
          <IconButton $w={15} aria-label="表格样式"><Icon name="tableStyle" /></IconButton>
          <Pick label="表格样式" value="Standard" w={79} pad={4} size={11} />
          <Divider />
          <IconButton $w={15} aria-label="引线样式"><Icon name="leader" /></IconButton>
          <Pick label="引线样式" value="Standard" w={77} pad={13} size={11} />
        </Strip>
      </ToolRow>
      <ToolRow>
        <Strip>
          <Pick label="工作空间" value="AutoCAD 经典" w={112} pad={7} />
          <Tools names="gear gearBox" />
        </Strip>
        <Grip />
        <Strip>
          <Tools names="layers" />
          <Pick label="图层" value="0" w={196} pad={2} before={["bulb", "sun", "freeze", "lock", "swatch"].map((n) => <Icon key={n} name={n} size={n === "swatch" ? 9 : 10} />)} />
          <Tools names="layerPrev layerState layerIso" />
        </Strip>
        <Grip />
        <Strip>
          <Pick label="颜色" value="ByLayer" w={97} mono size={9} before={<Icon name="swatch" size={9} />} />
          <Divider $gap={2} />
          <Pick label="线型" value="ByLayer" w={103} pad={2} mono size={9} before={<LineSample $w={39} />} />
          <Divider />
          <Pick label="线宽" value="ByLayer" w={80} mono size={9} before={<LineSample $w={22} />} />
          <Divider />
          <Pick label="打印样式" value="ByColor" w={77} pad={6} mono size={9} />
        </Strip>
      </ToolRow>
    </Toolbars>

    <Workspace>
      <Palette>
        <PaletteTitle>天正...</PaletteTitle>
        {paletteGroups.map((g, i) => (
          <PaletteGroup key={i} $h={g.h} $line={g.line}>
            {g.rows.map(([icon, text]) => (
              <li key={text + icon}><PaletteItem $inset={icon.startsWith("tri")}><Icon name={icon} size={icon.startsWith("tri") ? 8 : 11} />{text}</PaletteItem></li>
            ))}
          </PaletteGroup>
        ))}
      </Palette>

      <Editor>
        <EditorTop>
          <SideTools>
            <SideHead />
            <SideGroup $h={285}>
              <Tools names="line xline pline polygon rect arc circle rev spline ellipse ellArc insert makeBlock point hatch gradient region table mtext add" />
            </SideGroup>
          </SideTools>
          <CanvasColumn>
            <CanvasRow>
              <Canvas>
                <FloorPlan />
                <ViewCube />
              </Canvas>
              <VScroll $pad={2}>
                <Icon name="up" size={10} color="#222" weight={1.6} />
                <VThumb $h={38} $top={363} />
              </VScroll>
            </CanvasRow>
            <LayoutBar>
              <Tools names="first prev next last" w={12} h={12} size={9} />
              <LayoutTab $on>模型</LayoutTab>
              <LayoutTab>布局1</LayoutTab>
              <Slash stroke="#555"><path d="M0 12L5 0" /></Slash>
              <LayoutTab>布局2</LayoutTab>
              <Slash stroke="#555"><path d="M0 12L5 0" /></Slash>
              <Spacer />
              <HScrollPart><Icon name="left" size={9} color="#222" /></HScrollPart>
            </LayoutBar>
          </CanvasColumn>
          <SideTools>
            <SideHead $h={5} />
            <SideGroup $h={256} $bg="#e6f1f7">
              <Tools names="erase copyObj mirror offset array move rotate scale stretch trim extend breakPt breakIt join chamfer fillet blend explode" size={13} />
            </SideGroup>
            <SideHead $h={6} />
            <SideGroup $h={88}>
              <Tools names="front back above under textFront hatchBack" size={13} />
            </SideGroup>
          </SideTools>
        </EditorTop>
        <CommandDock>
          <CommandGrip>
            <Icon name="close" size={9} color="#fff" weight={3} />
            <Icon name="right" size={8} color="#fff" weight={2} />
          </CommandGrip>
          <CommandBody>
            <History>命令: TOpening</History>
            <CommandLine>
              <Icon name="prompt" size={12} />
              <Icon name="caret" size={9} />
              <span>
                <CommandName>TOPENING</CommandName>
                <Han>点取门窗插入位置</Han>(Shift-<Han>左右开</Han>)&lt;<Han>退出</Han>&gt;:
              </span>
              <input aria-label="命令输入" />
            </CommandLine>
          </CommandBody>
        </CommandDock>
      </Editor>
    </Workspace>

    <StatusBar>
      <StatusText $w={66}>比例 1:100 ▾</StatusText>
      <StatusText $w={100} $mono>84119, 8453, 0</StatusText>
      <Tools names="infer snap design ortho polar osnap osnap3 angle ducs dyn plus shade osnap copy cross" w={14} h={13} bg="#bcc1c4" />
      <Spacer />
      <StatusText $w={22}>模型</StatusText>
      <Tools names="zoomWin design" w={14} h={13} bg="#b5b5b5" />
      <StatusText $w={15}> </StatusText>
      <Tools names="person" w={14} h={13} bg="#a0a0a0" />
      <StatusText $w={25}>1:1 ▾</StatusText>
      <Tools names="person person | gear unlock ball" w={15} h={13} bg="#a0a0a0" />
      <StatusText $w={204}> </StatusText>
    </StatusBar>

    <BlockLibrary />

    <Marks width="1000" height="576" aria-hidden="true">
      <rect x="105" y="248" width="103" height="21" fill="none" stroke="#e3100f" strokeWidth="4" />
      <path d="M312 226L186 255" stroke="#d9201e" strokeWidth="2" />
      <path d="M171 258l15-9 3 11z" fill="#e3100f" />
      <path d="M659 405L510 321" stroke="#e3100f" strokeWidth="2" />
      <path d="M498 315l18 2-7 11z" fill="#e3100f" />
    </Marks>

    <Brand>
      <Deer />
      <BrandText>
        <BrandName>3D<span>溜溜网</span></BrandName>
        <BrandSite>3D66.COM</BrandSite>
      </BrandText>
    </Brand>
  </Page>
);

export default App;
